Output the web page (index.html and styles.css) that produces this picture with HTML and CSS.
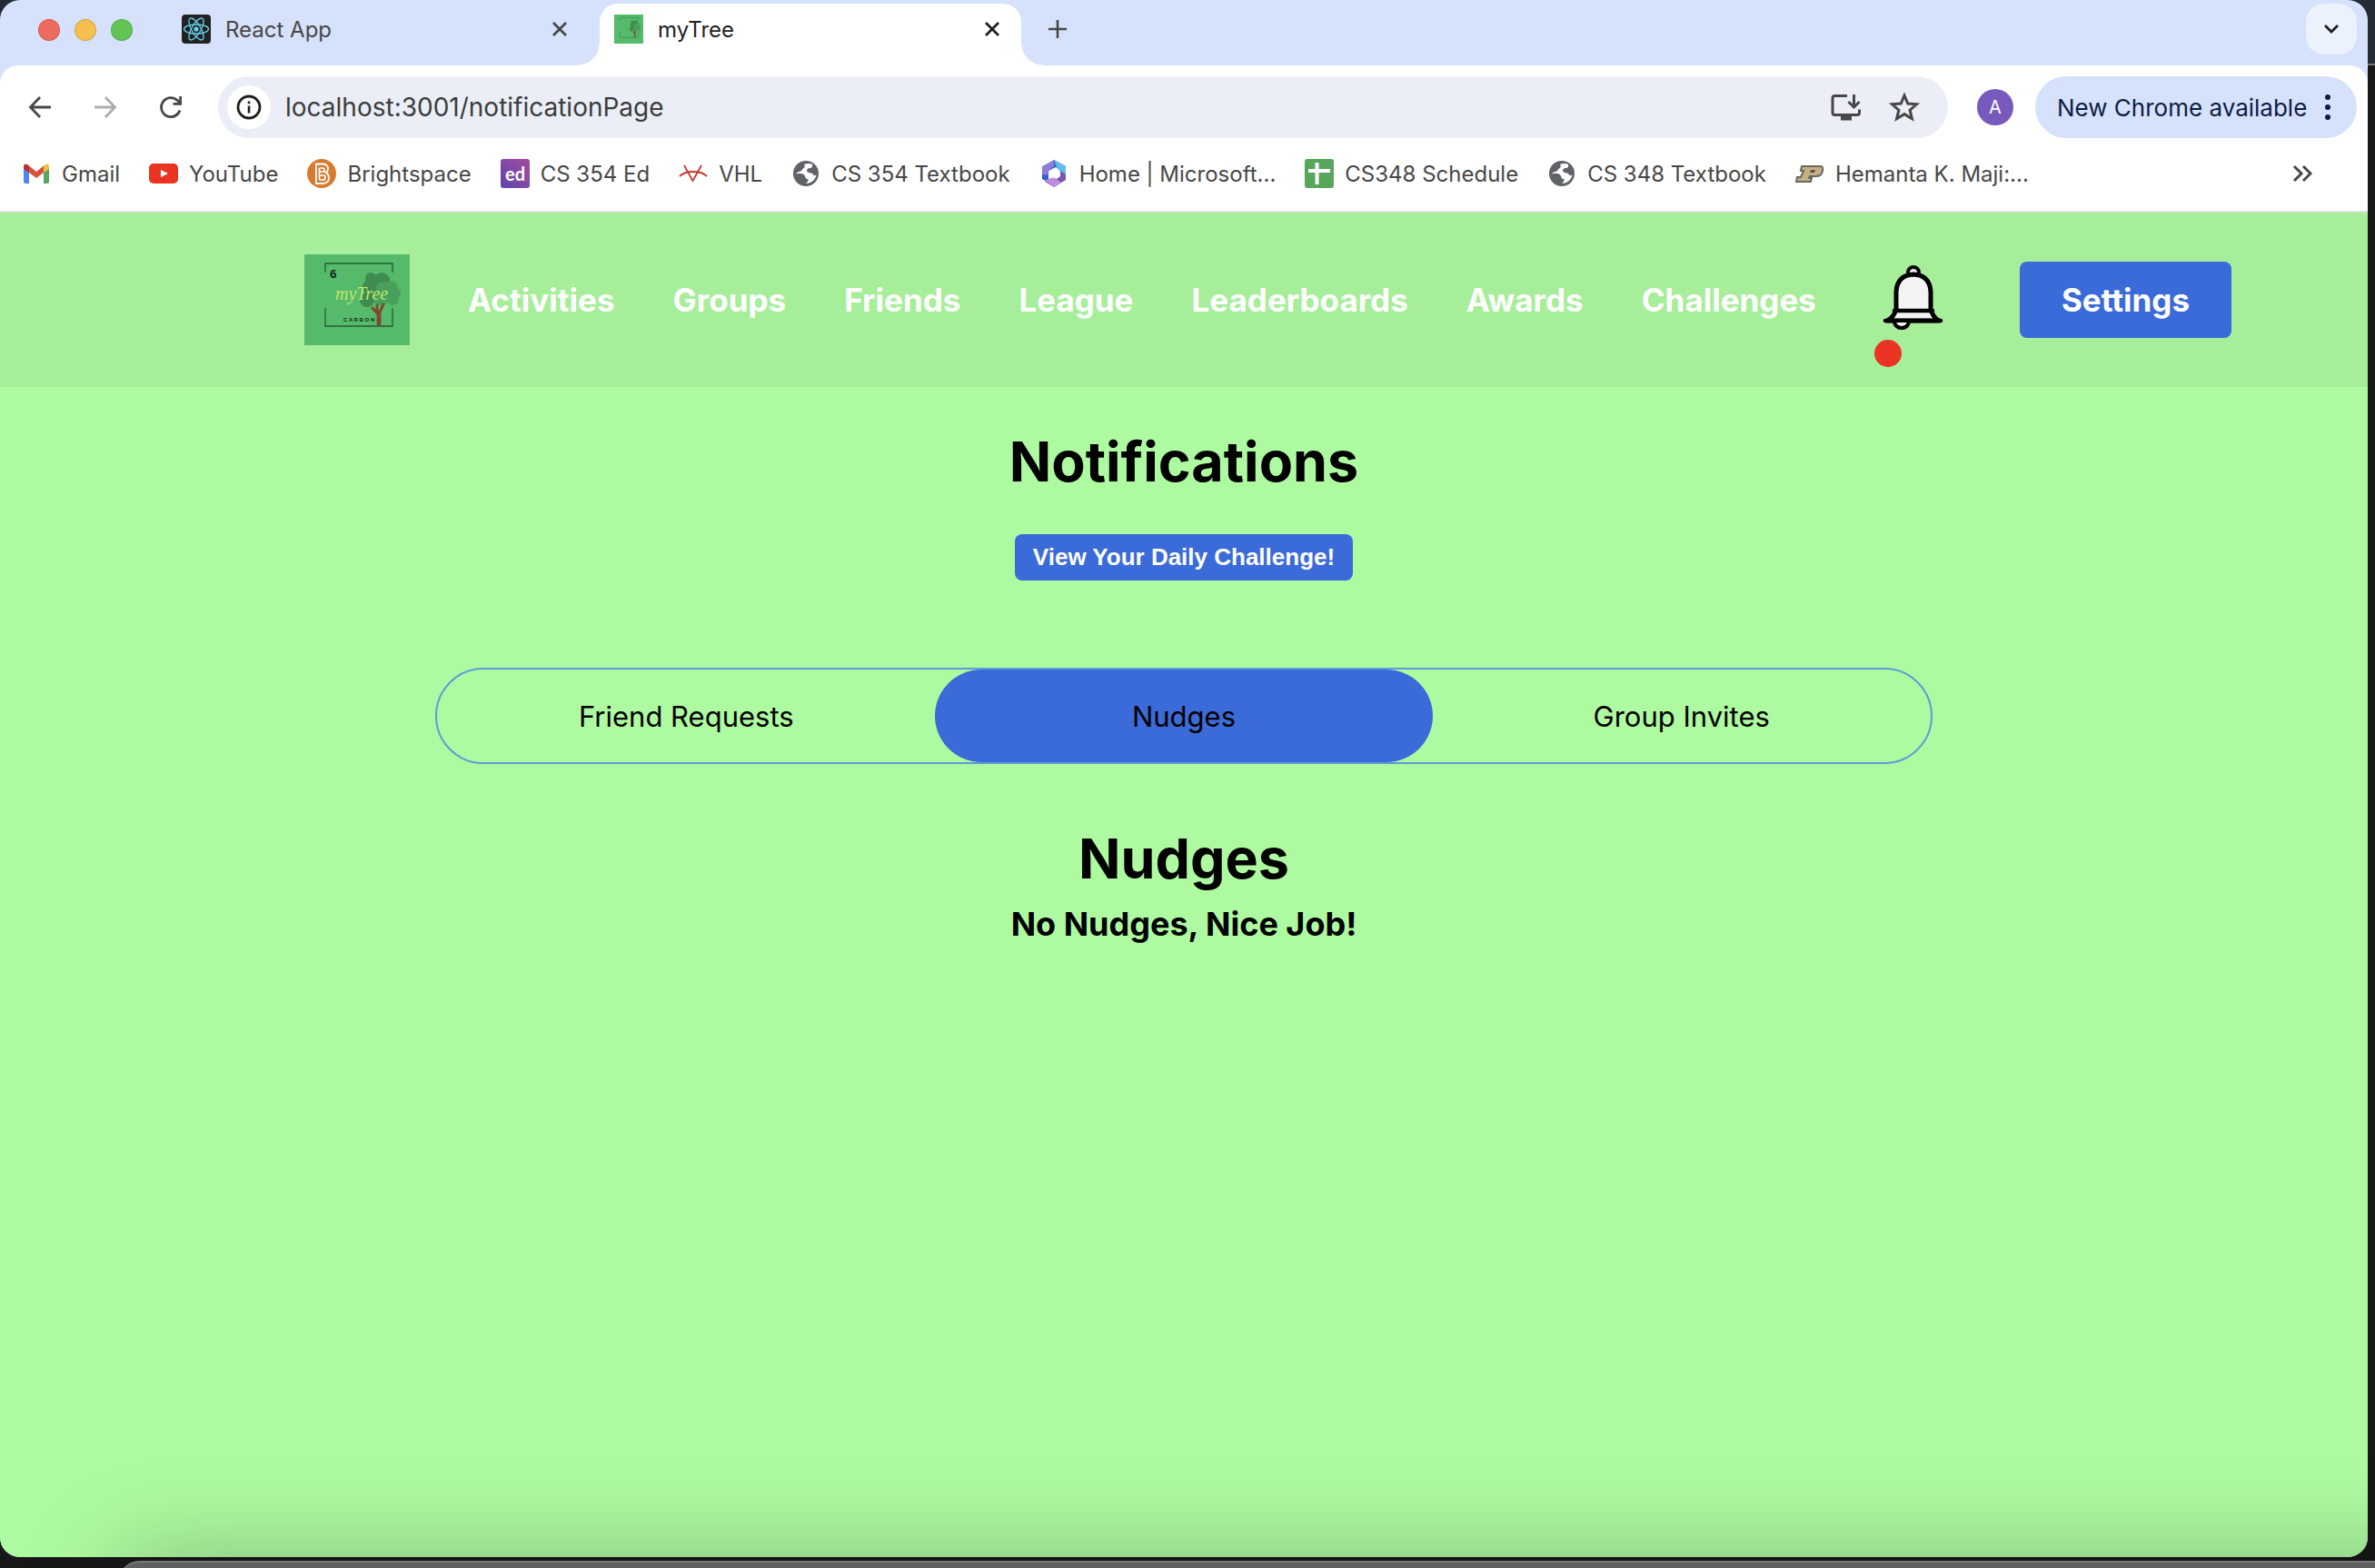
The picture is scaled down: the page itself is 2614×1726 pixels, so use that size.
FILE: index.html
```html
<!DOCTYPE html>
<html lang="en">
<head>
<meta charset="utf-8">
<title>myTree</title>
<meta name="viewport" content="width=device-width, initial-scale=1">
<link rel="stylesheet" href="styles.css">
</head>
<body>
<svg width="0" height="0" class="defs" aria-hidden="true">
  <defs>
    <symbol id="logo" viewBox="0 0 116 100" preserveAspectRatio="none">
      <rect width="116" height="100" fill="#55bb6b"/>
      <path d="M23 20V10H97V20M23 59V79H97V59" fill="none" stroke="#235c35" stroke-width="1.3"/>
      <g fill="#3f8b50"><circle cx="73" cy="26" r="6"/><circle cx="85" cy="29" r="9"/><circle cx="73" cy="36" r="9"/><circle cx="69" cy="50" r="8"/><circle cx="80" cy="42" r="10"/></g>
      <g fill="#49a05c"><circle cx="87" cy="38" r="8"/><circle cx="95" cy="37" r="8"/><circle cx="99" cy="43" r="7"/><circle cx="97" cy="49" r="7"/><circle cx="84" cy="49" r="8"/></g>
      <path d="M82 77V63M82 67L75 59M82 66L87 55M80 62V56" fill="none" stroke="#7d4a2d" stroke-width="3" stroke-linecap="round"/>
      <path d="M82 76V65" stroke="#7d4a2d" stroke-width="5" stroke-linecap="round"/>
    </symbol>
    <symbol id="globe" viewBox="0 0 32 32">
      <circle cx="16" cy="16" r="14" fill="#5f6368"/>
      <path d="M5 16.500c4-1.500 8-.5 9.500 1.500s.5 3.500 3 4c1.500.3 1.500 2 0 3.500l-1.500 1.500c5.500 0 10.500-4 11.500-9.500-2 1.500-3 .5-4-1s-3-1-4.500-1.500c-2.500-1-2.500-3.500-.5-4.500 1.500-.8 3 .2 4-1.200s0-2.300 1-3.300c-3-1.500-6.500-1.500-9.500 0 1.500 2 .5 3.500-1 4.500s-1 2.500-3 3-4 1-5 3z" fill="#fff"/>
    </symbol>
  </defs>
</svg>
<div class="desktop">
  <div class="browser">
    <div class="tabstrip">
      <div class="lights"><i class="light red"></i><i class="light amber"></i><i class="light green"></i></div>
      <div class="tab">
        <svg class="ico" viewBox="0 0 32 32"><rect width="32" height="32" rx="4" fill="#222"/><g fill="none" stroke="#67d3ee" stroke-width="1.300"><ellipse cx="16" cy="16" rx="13.500" ry="5"/><ellipse cx="16" cy="16" rx="13.500" ry="5" transform="rotate(60 16 16)"/><ellipse cx="16" cy="16" rx="13.500" ry="5" transform="rotate(120 16 16)"/></g><circle cx="16" cy="16" r="2.600" fill="#67d3ee"/></svg>
        <span class="tab-title">React App</span>
        <button class="bare close" aria-label="Close React App"><svg width="16" height="16" viewBox="0 0 16 16"><path d="M1 1L15 15M15 1L1 15" stroke="#474747" stroke-width="2.800"/></svg></button>
      </div>
      <div class="tab active">
        <svg class="ico"><use href="#logo"/></svg>
        <span class="tab-title">myTree</span>
        <button class="bare close" aria-label="Close myTree"><svg width="16" height="16" viewBox="0 0 16 16"><path d="M1 1L15 15M15 1L1 15" stroke="#1f1f1f" stroke-width="2.800"/></svg></button>
      </div>
      <button class="bare newtab" aria-label="New tab"><svg width="20" height="20" viewBox="0 0 20 20"><path d="M10 0V20M0 10H20" stroke="#474747" stroke-width="2.600"/></svg></button>
      <button class="tabsearch" aria-label="Search tabs"><svg width="18" height="12" viewBox="0 0 18 12"><path d="M2 2L9 9L16 2" fill="none" stroke="#1f1f1f" stroke-width="2.800"/></svg></button>
    </div>
    <div class="toolbar">
      <button class="bare tool" aria-label="Back"><svg width="32" height="32" viewBox="0 0 32 32"><path d="M16 5L5.500 16L16 27M5.500 16H28" fill="none" stroke="#474747" stroke-width="2.800"/></svg></button>
      <button class="bare tool" aria-label="Forward"><svg width="32" height="32" viewBox="0 0 32 32"><path d="M16 5L26.500 16L16 27M26.500 16H4" fill="none" stroke="#adadad" stroke-width="2.800"/></svg></button>
      <button class="bare tool" aria-label="Reload"><svg width="32" height="32" viewBox="0 0 32 32"><path d="M26 19.500A10.500 10.500 0 1 1 23.500 8.700L26 11.300M26.600 4V12.400H18.500" fill="none" stroke="#474747" stroke-width="2.800"/></svg></button>
      <div class="omnibox">
        <button class="bare siteinfo" aria-label="Site information"><svg width="30" height="30" viewBox="0 0 30 30"><circle cx="15" cy="15" r="12" fill="none" stroke="#1f1f1f" stroke-width="2.800"/><path d="M15 13.500V21.500M15 8.500V11.300" stroke="#1f1f1f" stroke-width="2.600"/></svg></button>
        <input class="url" type="text" aria-label="Address" value="localhost:3001/notificationPage">
        <button class="bare" aria-label="Install page"><svg width="36" height="32" viewBox="0 0 36 32"><path d="M19 3.500H5.500Q3 3.500 3 6V22Q3 24.500 5.500 24.500H30Q32.500 24.500 32.500 22V18.500" fill="none" stroke="#474747" stroke-width="3"/><path d="M12 25H24V30.500H12Z" fill="#474747"/><path d="M26.500 2V15.500M20.500 10L26.500 16L32.500 10" fill="none" stroke="#474747" stroke-width="3"/></svg></button>
        <button class="bare" aria-label="Bookmark this page"><svg width="36" height="36" viewBox="0 0 36 36"><path d="M18 5L21.800 14L31.500 14.800L24.100 21.200L26.400 30.700L18 25.600L9.600 30.700L11.900 21.200L4.500 14.800L14.200 14Z" fill="none" stroke="#474747" stroke-width="3"/></svg></button>
      </div>
      <button class="avatar">A</button>
      <button class="update"><span>New Chrome available</span><svg width="8" height="32" viewBox="0 0 8 32"><g fill="#0c1d45"><circle cx="4" cy="5" r="3"/><circle cx="4" cy="16" r="3"/><circle cx="4" cy="27" r="3"/></g></svg></button>
    </div>
    <nav class="bookmarks" aria-label="Bookmarks">
      <a href="#"><svg class="ico" viewBox="0 0 32 32"><path d="M2 8V25Q2 27 4 27H8V14Z" fill="#4f86ec"/><path d="M30 8V25Q30 27 28 27H24V14Z" fill="#58a55c"/><path d="M8 7.500L16 14L24 7.500V15L16 21L8 15Z" fill="#d94f3d"/><path d="M24 7.500L26 6Q30 4 30 9V11L24 15Z" fill="#f1bf42"/><path d="M8 7.500L6 6Q2 4 2 9V11L8 15Z" fill="#b5312b"/></svg>Gmail</a>
      <a href="#"><svg class="ico" viewBox="0 0 32 32"><rect y="5" width="32" height="22" rx="5" fill="#ea3323"/><path d="M13 12V20L21 16Z" fill="#fff"/></svg>YouTube</a>
      <a href="#"><svg class="ico" viewBox="0 0 32 32"><circle cx="16" cy="16" r="16" fill="#d87a30"/><path d="M10 5.500H18Q23 6 23 11Q23 14 21 15Q24 17 24 21Q24 26 18 27H10Z" fill="none" stroke="#fff" stroke-width="1.800"/><path d="M13.500 10H17.500Q19.500 10.500 19.500 14H13.500M13.500 18H19Q21 19 19 23H13.500M13.500 10V23" fill="none" stroke="#fff" stroke-width="1.700"/></svg>Brightspace</a>
      <a href="#"><svg class="ico" viewBox="0 0 32 32"><defs><linearGradient id="edg" x1="1" y1="0" x2="0" y2="1"><stop stop-color="#a44c9d"/><stop offset="1" stop-color="#5f44ae"/></linearGradient></defs><rect width="32" height="32" rx="3" fill="url(#edg)"/><text x="16" y="24" text-anchor="middle" class="ed">ed</text></svg>CS 354 Ed</a>
      <a href="#"><svg class="ico" viewBox="0 0 32 32"><path d="M1 19Q6 14 16 14T31 19M6 7L11 16L15.500 24L20 16L25 7" fill="none" stroke="#c43a36" stroke-width="1.800"/></svg>VHL</a>
      <a href="#"><svg class="ico"><use href="#globe"/></svg>CS 354 Textbook</a>
      <a href="#"><svg class="ico" viewBox="0 0 32 32"><path d="M16 1L29 8V17L18 9L10 13V24L3 21V10Z" fill="#3d63c9"/><path d="M16 1L29 8V19L20 11Z" fill="#63bdea"/><path d="M16 1L3 8V20L9 17Q10 11 16 8Z" fill="#8d7fd8"/><path d="M3 16L10 20V26L3 22Z" fill="#2c62c4"/><path d="M29 17V23L16 31L6 25L16 24L23 19V13Z" fill="#7955b4"/><path d="M6 24L16 31L24 26L16 20L10 22Z" fill="#bf8ae0"/><path d="M16 10L20 13V19L16 21L12 19V13Z" fill="#fff"/></svg>Home | Microsoft...</a>
      <a href="#"><svg class="ico" viewBox="0 0 32 32"><rect width="32" height="32" rx="3" fill="#58a55c"/><path d="M13.500 4V28M4 13H28" stroke="#fff" stroke-width="4"/></svg>CS348 Schedule</a>
      <a href="#"><svg class="ico"><use href="#globe"/></svg>CS 348 Textbook</a>
      <a href="#"><svg class="ico" viewBox="0 0 32 32"><path d="M7 8H28Q31 8 30 13Q29 19 23 19H16L15 21H18L17 25H1L2 20H6L9 13H6Z" fill="#c4b083" stroke="#6b6864" stroke-width="2"/><path d="M17 12H22L21 15H16Z" fill="#55524e"/></svg>Hemanta K. Maji:...</a>
      <button class="bare more" aria-label="More bookmarks"><svg width="24" height="20" viewBox="0 0 24 20"><path d="M3 2L11 10L3 18M13 2L21 10L13 18" fill="none" stroke="#474747" stroke-width="3"/></svg></button>
    </nav>
    <div class="page">
      <header class="site">
        <a class="logo" href="#" aria-label="myTree home"><svg width="116" height="100" viewBox="0 0 116 100"><use href="#logo" width="116" height="100"/><text x="28" y="26" class="six">6</text><text x="34" y="50" class="script">myTree</text><text x="43" y="74" class="carbon">C A R B O N</text></svg></a>
        <a href="#">Activities</a>
        <a href="#">Groups</a>
        <a href="#">Friends</a>
        <a href="#">League</a>
        <a href="#">Leaderboards</a>
        <a href="#">Awards</a>
        <a href="#">Challenges</a>
        <button class="bare bell" aria-label="Notifications"><svg width="96" height="88" viewBox="0 0 96 88"><circle cx="43" cy="14" r="6" fill="#f4f4f4" stroke="#000" stroke-width="4"/><path d="M24 54V35Q25 17 43 16Q61 17 62 35V54Q64 63 71 67H14Q22 63 24 54Z" fill="#f4f4f4" stroke="#000" stroke-width="5" stroke-linejoin="round"/><path d="M22 56H64M12 67H73" stroke="#000" stroke-width="4.500" stroke-linecap="round"/><path d="M22 69Q24 75 30 75T38 69" fill="#f4f4f4" stroke="#000" stroke-width="4"/></svg><i class="dot"></i></button>
        <button class="settings">Settings</button>
      </header>
      <main>
        <h1>Notifications</h1>
        <button class="daily">View Your Daily Challenge!</button>
        <div class="tabs" role="tablist">
          <button role="tab" aria-selected="false">Friend Requests</button>
          <button role="tab" aria-selected="true">Nudges</button>
          <button role="tab" aria-selected="false">Group Invites</button>
        </div>
        <h1>Nudges</h1>
        <h2>No Nudges, Nice Job!</h2>
      </main>
    </div>
  </div>
  <div class="dock"></div>
</div>
</body>
</html>
```
FILE: styles.css
```css
* { box-sizing: border-box; }
body { margin: 0; background: #151515; font-family: Inter, "Liberation Sans", sans-serif; font-size: 24px; color: #474747; }
.defs { position: absolute; }
a { color: inherit; text-decoration: none; }
button { font: inherit; color: inherit; border: 0; margin: 0; padding: 0; cursor: pointer; }
svg { display: block; flex: none; }
.bare { background: none; display: flex; align-items: center; justify-content: center; }
.ico { width: 32px; height: 32px; }

.desktop { min-height: 100vh; display: flex; flex-direction: column; overflow: hidden; background: linear-gradient(#252b35 70px, #777 70px, #777 72px, #181818 72px); }
.browser { flex: 1; display: flex; flex-direction: column; margin: 0 8px 4px 0; border-radius: 22px; overflow: hidden; background: #d6e1fb; }
.dock { height: 120px; margin: 0 -120px -112px 130px; border-top: 2px solid #7b7879; border-radius: 24px; background: #60605f; box-shadow: 0 0 110px rgba(0, 0, 0, .26); position: relative; }

.tabstrip { height: 72px; display: flex; align-items: flex-start; padding: 4px 12px 0 42px; }
.lights { display: flex; gap: 16px; height: 58px; align-items: center; margin-right: 38px; }
.light { width: 24px; height: 24px; border-radius: 50%; border: 1px solid rgba(0, 0, 0, .12); }
.red { background: #ec6a5e; }
.amber { background: #f4bf4f; }
.green { background: #61c554; }
.tab { width: 476px; height: 68px; padding: 0 36px 12px 16px; display: flex; align-items: center; gap: 16px; }
.tab-title { flex: 1; }
.close { width: 16px; height: 32px; }
.active { width: 464px; padding-right: 24px; background: #fff; color: #1f1f1f; border-radius: 20px 20px 0 0; position: relative; }
.active::before, .active::after { content: ""; position: absolute; bottom: 0; width: 24px; height: 24px; }
.active::before { right: 100%; background: radial-gradient(circle at 0 0, transparent 23px, #fff 24px); }
.active::after { left: 100%; background: radial-gradient(circle at 100% 0, transparent 23px, #fff 24px); }
.newtab { width: 80px; height: 56px; }
.tabsearch { width: 56px; height: 56px; margin-left: auto; border-radius: 20px; background: #ebf2fc; display: flex; align-items: center; justify-content: center; }

.toolbar { height: 88px; padding: 12px 12px 8px 8px; display: flex; align-items: center; background: #fff; border-radius: 20px 20px 0 0; }
.tool { width: 72px; height: 56px; }
.omnibox { flex: 1; height: 68px; margin-left: 16px; padding: 0 30px 0 10px; border-radius: 34px; background: #ebeef6; display: flex; align-items: center; gap: 28px; }
.siteinfo { width: 48px; height: 48px; border-radius: 50%; background: #fff; }
.url { flex: 1; min-width: 0; height: 48px; margin-left: -12px; padding: 0; border: 0; outline: 0; font: 28px Inter, "Liberation Sans", sans-serif; color: #3c3c3c; background: none; }
.avatar { width: 40px; height: 40px; margin: 0 24px 0 32px; border-radius: 50%; background: #7859bc; color: #fff; font-size: 20px; }
.update { width: 354px; height: 68px; padding: 0 28px 0 24px; border-radius: 34px; background: #d6e1fb; color: #0c1d45; display: flex; align-items: center; justify-content: space-between; font-size: 26px; }

.bookmarks { height: 74px; padding: 0 60px 10px 24px; display: flex; align-items: center; gap: 32px; background: #fff; border-bottom: 2px solid #e0e0e0; white-space: nowrap; }
.bookmarks a { display: flex; align-items: center; gap: 12px; }
.more { margin-left: auto; }
.ed { font: bold 20px Lato, sans-serif; fill: #fff; }

.page { flex: 1; background: #aefaa1; color: #000; }
.site { height: 192px; padding: 0 150px 0 335px; display: flex; align-items: center; justify-content: space-between; background: #a7ee9a; color: #fff; font-size: 35px; font-weight: 700; }
.six { font: bold 13px "Noto Sans", sans-serif; fill: #102a18; }
.script { font: italic 20px "Liberation Serif", serif; fill: #c3e66e; }
.carbon { font: bold 6px "Liberation Sans", sans-serif; fill: #102a18; }
.bell { position: relative; width: 96px; height: 88px; }
.dot { position: absolute; left: 0; top: 88px; width: 30px; height: 30px; border-radius: 50%; background: #ea3323; }
.settings { width: 233px; height: 84px; border-radius: 8px; background: #3b6ad9; }

main { padding: 44px 36px; display: flex; flex-direction: column; align-items: center; }
h1 { margin: 0; font-size: 61px; line-height: 76px; font-weight: 700; }
h2 { margin: 10px 0 0; font-size: 36px; line-height: 48px; font-weight: 700; }
.daily { height: 51px; margin: 42px 0 96px; padding: 0 20px; border-radius: 8px; background: #3b6ad9; color: #fff; font: bold 26px "Liberation Sans", sans-serif; }
.tabs { width: 65%; height: 106px; margin-bottom: 66px; display: grid; grid-template-columns: repeat(3, 1fr); border: 2px solid #5a9ed6; border-radius: 53px; }
.tabs button { border-radius: 51px; background: none; font-size: 31px; color: #000; }
.tabs button[aria-selected="true"] { background: #3b6ad9; }
```
